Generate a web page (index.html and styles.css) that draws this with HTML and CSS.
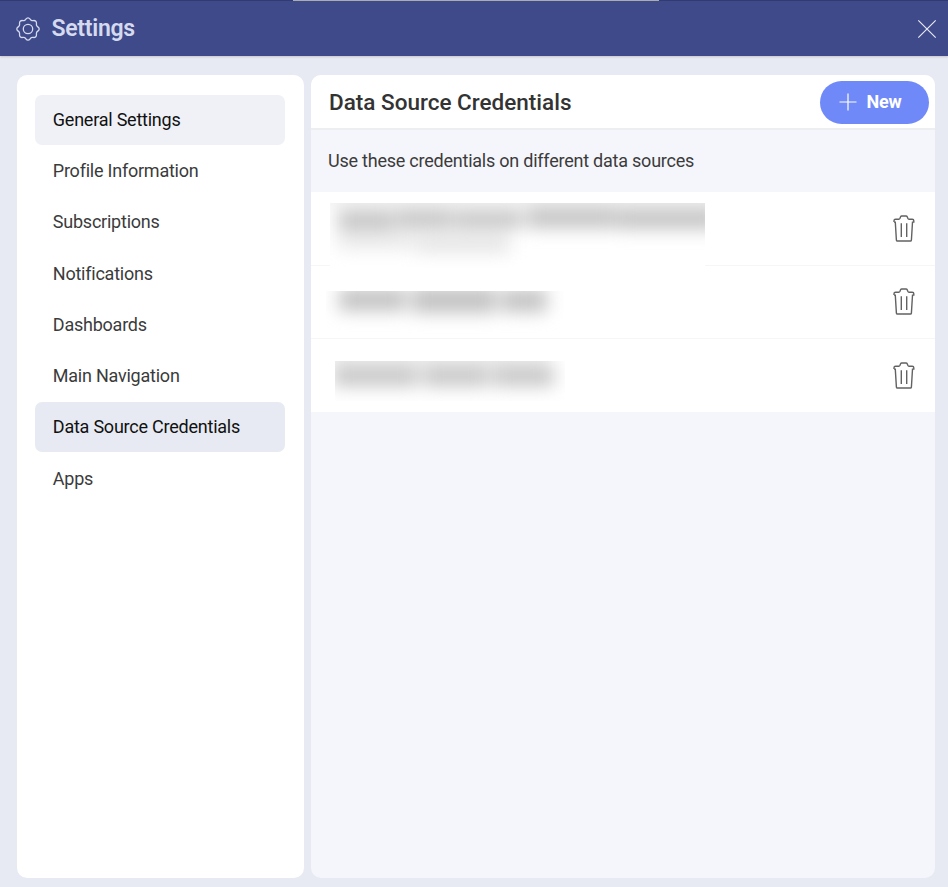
FILE: index.html
```html
<!DOCTYPE html>
<html lang="en">
<head>
<meta charset="utf-8">
<title>Settings</title>
<link rel="stylesheet" href="styles.css">
</head>
<body>
<svg class="defs" aria-hidden="true">
  <symbol id="trash" viewBox="0 0 24 30">
    <path d="M2 8.1V6.8Q2 5.2 3.6 5.2H6.8Q7.6 5.2 8 4.3L8.6 2.8Q8.9 2 9.8 2H14Q14.9 2 15.2 2.8L15.8 4.3Q16.2 5.2 17 5.2H20.2Q21.8 5.2 21.8 6.8V8.1H20.5L19.4 26.1Q19.3 27 18.4 27H5.4Q4.5 27 4.4 26.1L3.3 8.1H2M9.3 9.2V23M14.7 9.2V23" fill="none" stroke="#626262" stroke-width="1.4"/>
  </symbol>
</svg>
<div class="app">
  <header class="header">
    <svg class="gear" viewBox="0 0 24 24" fill="none" stroke="#d6daee" stroke-width="1.3"><path d="M12 .8C14 .8 14 2.8 15.4 3.4C16.8 4 18.4 2.8 19.8 4.2C21.2 5.6 20 7.2 20.6 8.6C21.2 10 23.2 10 23.2 12C23.2 14 21.2 14 20.6 15.4C20 16.8 21.2 18.4 19.8 19.8C18.4 21.2 16.8 20 15.4 20.6C14 21.2 14 23.2 12 23.2C10 23.2 10 21.2 8.6 20.6C7.2 20 5.6 21.2 4.2 19.8C2.8 18.4 4 16.8 3.4 15.4C2.8 14 .8 14 .8 12C.8 10 2.8 10 3.4 8.6C4 7.2 2.8 5.6 4.2 4.2C5.6 2.8 7.2 4 8.6 3.4C10 2.8 10 .8 12 .8Z"/><circle cx="12" cy="12" r="4.7"/></svg>
    <h1 class="title">Settings</h1>
    <svg class="close" viewBox="0 0 20 20" stroke="#e6e8f5" stroke-width="1.2"><path d="M1.3 1.3L18.7 18.7M18.7 1.3L1.3 18.7"/></svg>
  </header>
  <main class="content">
    <nav class="sidebar">
      <a class="item hover">General Settings</a>
      <a class="item">Profile Information</a>
      <a class="item">Subscriptions</a>
      <a class="item">Notifications</a>
      <a class="item">Dashboards</a>
      <a class="item">Main Navigation</a>
      <a class="item active">Data Source Credentials</a>
      <a class="item">Apps</a>
    </nav>
    <section class="panel">
      <div class="panel-head">
        <h2 class="panel-title">Data Source Credentials</h2>
        <button class="new"><svg class="plus" viewBox="0 0 18 18" stroke="#fff" stroke-width="1.2"><path d="M9 .5V17.5M.5 9H17.5"/></svg><span class="new-label">New</span></button>
      </div>
      <p class="hint">Use these credentials on different data sources</p>
      <div class="row">
        <div class="mask mask-a"><svg class="smudge" viewBox="0 0 375 65"><path fill="#c4c4c4" d="M8 7H64V27H8ZM66 6H122V25H66ZM124 7H192V25H124ZM197 4H286V25H197ZM287 5H390V26H287Z"/><path fill="#e6e6e6" d="M8 31H84V45H8ZM86 31H180V50H86ZM-10 -15H390V-3H-10Z"/></svg></div>
        <svg class="trash"><use href="#trash"/></svg>
      </div>
      <div class="row">
        <div class="mask mask-b"><svg class="smudge" viewBox="0 0 240 46"><path fill="#c3c3c3" d="M13 -3H80V20H13ZM86 -4H170V22H86ZM175 -2H221V21H175Z"/></svg></div>
        <svg class="trash"><use href="#trash"/></svg>
      </div>
      <div class="row">
        <div class="mask mask-c"><svg class="smudge" viewBox="0 0 230 40"><path fill="#c6c6c6" d="M-2 5H83V25H-2ZM88 5H154V25H88ZM158 5H219V25H158Z"/><path fill="#e6e6e6" d="M-8 -12H215V0H-8Z"/></svg></div>
        <svg class="trash"><use href="#trash"/></svg>
      </div>
    </section>
  </main>
</div>
</body>
</html>
```
FILE: styles.css
```css
* { box-sizing: border-box; }
body { margin: 0; background: #fff; font-family: Roboto, sans-serif; color: #3b3b3c; }
.defs { display: none; }
.app { height: 887px; display: flex; flex-direction: column; background: #e7eaf3; }
.header {
  height: 56px; flex: none; display: flex; align-items: center;
  padding: 1px 11.5px 0 16px;
  background: linear-gradient(90deg, #323b70 293px, #aaacae 293px 659px, #323b70 659px) top / 100% 1px no-repeat, #3f4a8a;
  box-shadow: 0 1px 2px #c9c5ca;
}
.gear { width: 24px; height: 24px; }
.title { margin: 0 0 0 11.5px; font-size: 23px; font-weight: 600; line-height: 28px; letter-spacing: -.28px; color: #d6daee; }
.close { width: 20px; height: 20px; margin-left: auto; }
.content { flex: 1; display: flex; gap: 7px; padding: 19px 13px 9px 17px; }
.sidebar {
  width: 287px; border-radius: 10px; background: #fff; padding: 20px 18.7px 20px 18.3px;
  display: flex; flex-direction: column; gap: 1.23px;
}
.item { height: 50px; padding-left: 17.5px; border-radius: 7px; font-size: 18px; line-height: 50px; letter-spacing: -.23px; }
.hover { background: #f0f1f7; color: #111; }
.active { background: #e7eaf2; color: #111; }
.panel { flex: 1; border-radius: 10px; background: #f5f6fb; overflow: hidden; }
.panel-head {
  height: 55px; display: flex; align-items: center; justify-content: space-between;
  padding: 1px 6px 0 18px; background: #fff; border-bottom: 2px solid #eceeef;
}
.panel-title { margin: 0; font-size: 22.5px; font-weight: 500; color: #333; }
.new {
  width: 109px; height: 43px; border: 0; border-radius: 22px; background: #6f89f8;
  display: flex; align-items: center; gap: 9.5px; padding: 0 0 0 19px;
  font: 700 18px Roboto, sans-serif; letter-spacing: -.2px; color: #fff;
}
.new-label { padding-bottom: 2px; }
.plus { width: 18px; height: 18px; }
.hint { margin: 0; height: 62px; padding-left: 17px; font-size: 18px; line-height: 62px; letter-spacing: -.23px; }
.row {
  height: 73.7px; display: flex; align-items: flex-start; justify-content: space-between;
  padding-right: 19px; background: #fff; border-bottom: 1px solid #f6f6f6;
}
.row:last-child { height: 73px; border-bottom-color: #fff; }
.trash { width: 24px; height: 30px; margin-top: 21.5px; }
.mask { overflow: hidden; background: #fff; }
.mask-a { width: 375px; height: 65px; margin: 11px 0 0 19px; }
.mask-b { width: 240px; height: 46px; margin: 25px 0 0 15px; }
.mask-c { width: 230px; height: 40px; margin: 21.6px 0 0 24px; }
.smudge { display: block; width: 100%; height: 100%; overflow: visible; filter: blur(8.5px); }
```
